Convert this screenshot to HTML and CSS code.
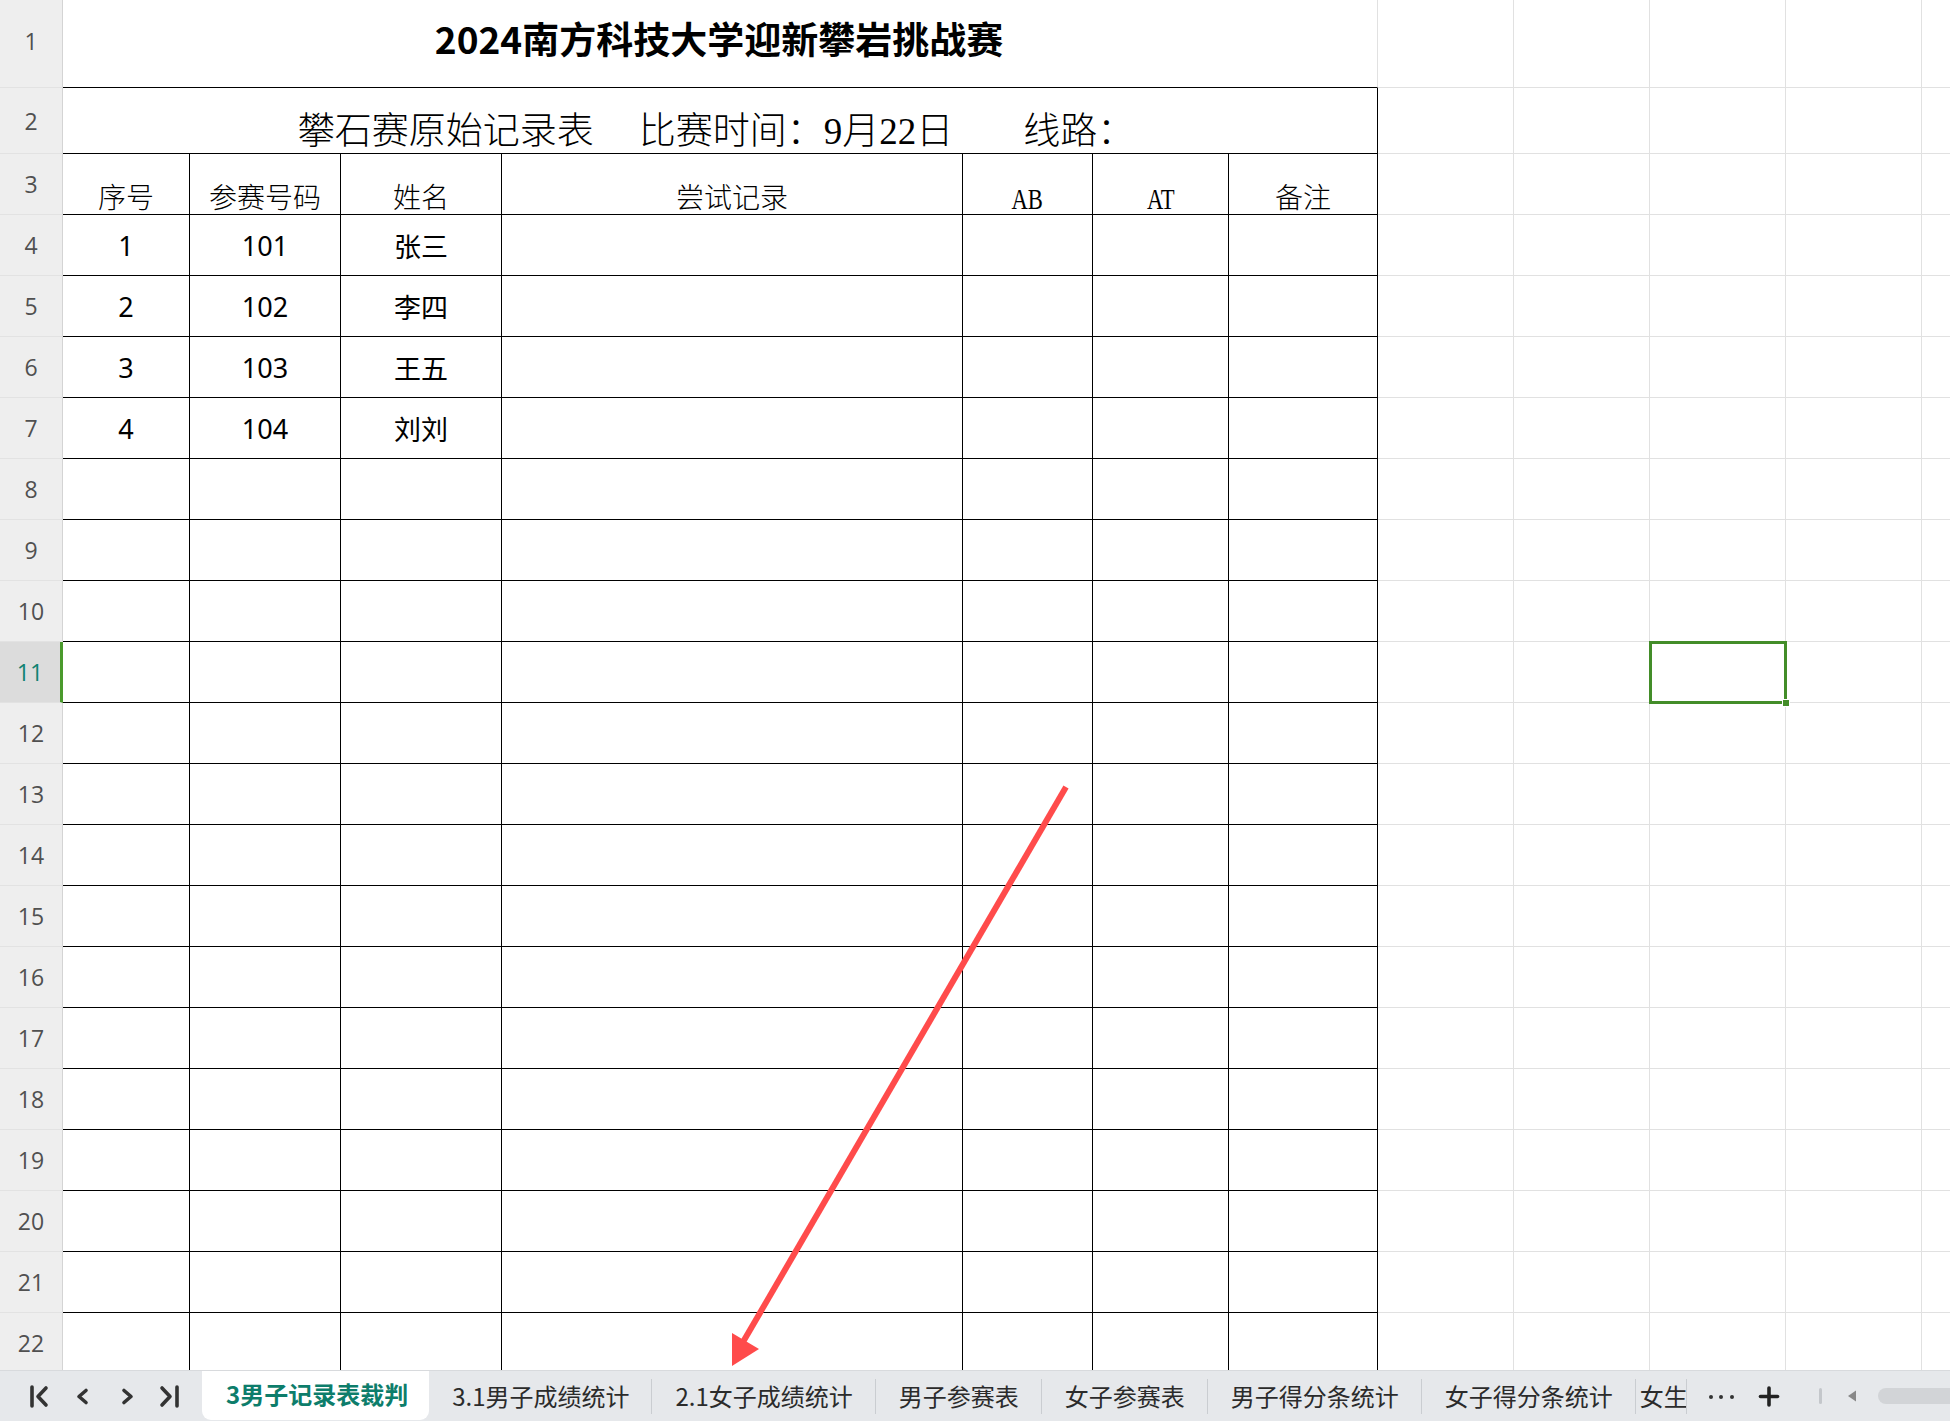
FILE: index.html
```html
<!DOCTYPE html>
<html lang="zh-CN">
<head>
<meta charset="utf-8">
<title>2024南方科技大学迎新攀岩挑战赛</title>
<link rel="stylesheet" href="styles.css">
</head>
<body>
<div class="app">
  <div class="sheet">
    <div class="row r1">
      <div class="h h1">1</div>
      <div class="title">2024南方科技大学迎新攀岩挑战赛</div>
      <div class="g"></div><div class="g"></div><div class="g"></div><div class="g"></div><div class="g"></div>
    </div>
    <div class="row r2">
      <div class="h">2</div>
      <div class="sub"><span>攀石赛原始记录表</span><span class="s2">比赛时间：<span class="lat">9</span>月<span class="lat">22</span>日</span><span class="s3">线路：</span></div>
      <div class="g"></div><div class="g"></div><div class="g"></div><div class="g"></div><div class="g"></div>
    </div>
    <div class="row">
      <div class="h">3</div>
      <div class="t th">序号</div>
      <div class="t th">参赛号码</div>
      <div class="t th">姓名</div>
      <div class="t th">尝试记录</div>
      <div class="t th"><span class="narrow">AB</span></div>
      <div class="t th"><span class="narrow">AT</span></div>
      <div class="t th">备注</div>
      <div class="g"></div><div class="g"></div><div class="g"></div><div class="g"></div><div class="g"></div>
    </div>
    <div class="row">
      <div class="h">4</div>
      <div class="t td">1</div><div class="t td">101</div><div class="t td">张三</div>
      <div class="t"></div><div class="t"></div><div class="t"></div><div class="t"></div>
      <div class="g"></div><div class="g"></div><div class="g"></div><div class="g"></div><div class="g"></div>
    </div>
    <div class="row">
      <div class="h">5</div>
      <div class="t td">2</div><div class="t td">102</div><div class="t td">李四</div>
      <div class="t"></div><div class="t"></div><div class="t"></div><div class="t"></div>
      <div class="g"></div><div class="g"></div><div class="g"></div><div class="g"></div><div class="g"></div>
    </div>
    <div class="row">
      <div class="h">6</div>
      <div class="t td">3</div><div class="t td">103</div><div class="t td">王五</div>
      <div class="t"></div><div class="t"></div><div class="t"></div><div class="t"></div>
      <div class="g"></div><div class="g"></div><div class="g"></div><div class="g"></div><div class="g"></div>
    </div>
    <div class="row">
      <div class="h">7</div>
      <div class="t td">4</div><div class="t td">104</div><div class="t td">刘刘</div>
      <div class="t"></div><div class="t"></div><div class="t"></div><div class="t"></div>
      <div class="g"></div><div class="g"></div><div class="g"></div><div class="g"></div><div class="g"></div>
    </div>
    <div class="row">
      <div class="h">8</div>
      <div class="t"></div><div class="t"></div><div class="t"></div><div class="t"></div><div class="t"></div><div class="t"></div><div class="t"></div>
      <div class="g"></div><div class="g"></div><div class="g"></div><div class="g"></div><div class="g"></div>
    </div>
    <div class="row">
      <div class="h">9</div>
      <div class="t"></div><div class="t"></div><div class="t"></div><div class="t"></div><div class="t"></div><div class="t"></div><div class="t"></div>
      <div class="g"></div><div class="g"></div><div class="g"></div><div class="g"></div><div class="g"></div>
    </div>
    <div class="row">
      <div class="h">10</div>
      <div class="t"></div><div class="t"></div><div class="t"></div><div class="t"></div><div class="t"></div><div class="t"></div><div class="t"></div>
      <div class="g"></div><div class="g"></div><div class="g"></div><div class="g"></div><div class="g"></div>
    </div>
    <div class="row">
      <div class="h cur">11</div>
      <div class="t"></div><div class="t"></div><div class="t"></div><div class="t"></div><div class="t"></div><div class="t"></div><div class="t"></div>
      <div class="g"></div><div class="g"></div><div class="g sel"><div class="selbox"><i class="handle"></i></div></div><div class="g"></div><div class="g"></div>
    </div>
    <div class="row">
      <div class="h">12</div>
      <div class="t"></div><div class="t"></div><div class="t"></div><div class="t"></div><div class="t"></div><div class="t"></div><div class="t"></div>
      <div class="g"></div><div class="g"></div><div class="g"></div><div class="g"></div><div class="g"></div>
    </div>
    <div class="row">
      <div class="h">13</div>
      <div class="t"></div><div class="t"></div><div class="t"></div><div class="t"></div><div class="t"></div><div class="t"></div><div class="t"></div>
      <div class="g"></div><div class="g"></div><div class="g"></div><div class="g"></div><div class="g"></div>
    </div>
    <div class="row">
      <div class="h">14</div>
      <div class="t"></div><div class="t"></div><div class="t"></div><div class="t"></div><div class="t"></div><div class="t"></div><div class="t"></div>
      <div class="g"></div><div class="g"></div><div class="g"></div><div class="g"></div><div class="g"></div>
    </div>
    <div class="row">
      <div class="h">15</div>
      <div class="t"></div><div class="t"></div><div class="t"></div><div class="t"></div><div class="t"></div><div class="t"></div><div class="t"></div>
      <div class="g"></div><div class="g"></div><div class="g"></div><div class="g"></div><div class="g"></div>
    </div>
    <div class="row">
      <div class="h">16</div>
      <div class="t"></div><div class="t"></div><div class="t"></div><div class="t"></div><div class="t"></div><div class="t"></div><div class="t"></div>
      <div class="g"></div><div class="g"></div><div class="g"></div><div class="g"></div><div class="g"></div>
    </div>
    <div class="row">
      <div class="h">17</div>
      <div class="t"></div><div class="t"></div><div class="t"></div><div class="t"></div><div class="t"></div><div class="t"></div><div class="t"></div>
      <div class="g"></div><div class="g"></div><div class="g"></div><div class="g"></div><div class="g"></div>
    </div>
    <div class="row">
      <div class="h">18</div>
      <div class="t"></div><div class="t"></div><div class="t"></div><div class="t"></div><div class="t"></div><div class="t"></div><div class="t"></div>
      <div class="g"></div><div class="g"></div><div class="g"></div><div class="g"></div><div class="g"></div>
    </div>
    <div class="row">
      <div class="h">19</div>
      <div class="t"></div><div class="t"></div><div class="t"></div><div class="t"></div><div class="t"></div><div class="t"></div><div class="t"></div>
      <div class="g"></div><div class="g"></div><div class="g"></div><div class="g"></div><div class="g"></div>
    </div>
    <div class="row">
      <div class="h">20</div>
      <div class="t"></div><div class="t"></div><div class="t"></div><div class="t"></div><div class="t"></div><div class="t"></div><div class="t"></div>
      <div class="g"></div><div class="g"></div><div class="g"></div><div class="g"></div><div class="g"></div>
    </div>
    <div class="row">
      <div class="h">21</div>
      <div class="t"></div><div class="t"></div><div class="t"></div><div class="t"></div><div class="t"></div><div class="t"></div><div class="t"></div>
      <div class="g"></div><div class="g"></div><div class="g"></div><div class="g"></div><div class="g"></div>
    </div>
    <div class="row">
      <div class="h">22</div>
      <div class="t"></div><div class="t"></div><div class="t"></div><div class="t"></div><div class="t"></div><div class="t"></div><div class="t"></div>
      <div class="g"></div><div class="g"></div><div class="g"></div><div class="g"></div><div class="g"></div>
    </div>

    <svg class="arrow" width="1950" height="1370" viewBox="0 0 1950 1370">
      <line x1="1066" y1="787" x2="743" y2="1342" stroke="#ff4b4b" stroke-width="6"/>
      <polygon points="732,1333 732,1366 759,1349" fill="#ff4b4b"/>
    </svg>
  </div>

  <div class="tabbar">
    <svg class="nav" width="202" height="50" viewBox="0 0 202 50">
      <g fill="none" stroke="#333" stroke-width="3.6" stroke-linecap="round" stroke-linejoin="round">
        <path d="M32 16 V35"/>
        <path d="M46 17 L38 25.5 L46 34"/>
        <path d="M86 19.5 L79 25.5 L86 31.5"/>
        <path d="M124 19.5 L131 25.5 L124 31.5"/>
        <path d="M162 17 L170 25.5 L162 34"/>
        <path d="M177 16 V35"/>
      </g>
    </svg>
    <div class="tabs">
      <div class="tab active">3男子记录表裁判</div>
      <div class="tab">3.1男子成绩统计</div><i class="sep"></i>
      <div class="tab">2.1女子成绩统计</div><i class="sep"></i>
      <div class="tab">男子参赛表</div><i class="sep"></i>
      <div class="tab">女子参赛表</div><i class="sep"></i>
      <div class="tab">男子得分条统计</div><i class="sep"></i>
      <div class="tab">女子得分条统计</div><i class="sep"></i>
      <div class="tab last">女生得分条统计</div>
    </div>
    <i class="sep"></i>
    <div class="more">
      <svg width="68" height="50" viewBox="0 0 68 50"><g fill="#333"><circle cx="24" cy="26" r="2"/><circle cx="34" cy="26" r="2"/><circle cx="45" cy="26" r="2"/></g></svg>
    </div>
    <div class="add">
      <svg width="28" height="50" viewBox="0 0 28 50"><g stroke="#222" stroke-width="3.6" stroke-linecap="round"><path d="M14 17 V34"/><path d="M5.5 25.5 H22.5"/></g></svg>
    </div>
    <i class="vbar"></i>
    <svg class="tri" width="10" height="12" viewBox="0 0 10 12"><path d="M9 0.5 V11.5 L1 6 Z" fill="#888"/></svg>
    <div class="thumb"></div>
  </div>
</div>
</body>
</html>
```
FILE: styles.css
```css
* { box-sizing: border-box; }
html, body { margin: 0; padding: 0; }
body {
  width: 1950px;
  height: 1421px;
  overflow: hidden;
  background: #fff;
  font-family: "Noto Sans", "Noto Sans CJK SC", sans-serif;
}
.app {
  display: flex;
  flex-direction: column;
  width: 1950px;
  height: 1421px;
}
.sheet {
  position: relative;
  height: 1370px;
  overflow: hidden;
  flex: none;
}
.row {
  display: grid;
  grid-template-columns: 63px 127px 151px 161px 461px 130px 136px 149px 136px 136px 136px 136px 136px;
  height: 61px;
}
.r1 { height: 88px; }
.r2 { height: 66px; }
.row > div { min-width: 0; overflow: hidden; }

.h {
  background: #eeeeee;
  border-right: 1px solid #d4d4d4;
  border-bottom: 1px solid #e2e2e2;
  color: #505050;
  font-family: "Open Sans", "Noto Sans", sans-serif;
  font-size: 23px;
  display: flex;
  align-items: center;
  justify-content: center;
}
.h.h1 { padding-bottom: 6px; }
.h.cur {
  background: #dcdcdc;
  color: #0f8272;
  border-right: 3px solid #4a9a2c;
}
.g {
  border-right: 1px solid #e1e1e1;
  border-bottom: 1px solid #e1e1e1;
}
.t {
  border-right: 1px solid #000;
  border-bottom: 1px solid #000;
}
.title {
  grid-column: span 7;
  border-bottom: 1px solid #000;
  border-right: 1px solid #e1e1e1;
  display: flex;
  align-items: center;
  justify-content: center;
  font-family: "Noto Sans CJK SC", sans-serif;
  font-weight: 700;
  font-size: 37px;
  color: #000;
  padding: 0 2px 12px 0;
  white-space: nowrap;
}
.sub {
  grid-column: span 7;
  border-bottom: 1px solid #000;
  border-right: 1px solid #000;
  display: flex;
  align-items: flex-end;
  justify-content: center;
  padding: 0 8px 0 0;
  font-family: "Liberation Serif", "Noto Sans CJK SC", serif;
  font-weight: 300;
  font-size: 37px;
  line-height: 42px;
  color: #000;
  white-space: nowrap;
}
.sub .s2 { margin-left: 45px; }
.sub .s3 { margin-left: 70px; }
.lat { font-weight: 400; }
.th {
  display: flex;
  align-items: flex-end;
  justify-content: center;
  font-family: "Liberation Serif", "Noto Sans CJK SC", serif;
  font-weight: 300;
  font-size: 28px;
  line-height: 30px;
  color: #000;
  padding-bottom: 0;
  white-space: nowrap;
}
.narrow {
  display: inline-block;
  font-weight: 400;
  font-size: 29px;
  transform: scaleX(0.78);
}
.td {
  display: flex;
  align-items: center;
  justify-content: center;
  font-family: "Noto Sans", "Noto Sans CJK SC", sans-serif;
  font-size: 27px;
  color: #000;
  padding-top: 0;
}
.sel { position: relative; overflow: visible !important; }
.selbox {
  position: absolute;
  top: -1px;
  left: -1px;
  right: -2px;
  bottom: -2px;
  border: 3px solid #438d29;
  z-index: 2;
}
.handle {
  position: absolute;
  right: -6px;
  bottom: -6px;
  width: 8px;
  height: 8px;
  background: #438d29;
  border: 1px solid #fff;
}
.arrow {
  position: absolute;
  top: 0;
  left: 0;
  pointer-events: none;
  z-index: 3;
}

.tabbar {
  flex: none;
  height: 51px;
  background: #e6e8eb;
  border-top: 1px solid #d8dadd;
  display: flex;
  align-items: stretch;
  font-family: "Noto Sans CJK SC", sans-serif;
  font-size: 24px;
  color: #2b2b2b;
}
.nav { flex: none; display: block; }
.tabs {
  display: flex;
  align-items: center;
  width: 1484px;
  flex: none;
  overflow: hidden;
}
.tab {
  flex: none;
  height: 100%;
  display: flex;
  align-items: center;
  padding: 0 22px 2px 23px;
  white-space: nowrap;
}
.tab.active {
  background: #fff;
  color: #0d7d6b;
  font-weight: 700;
  margin-top: -1px;
  height: calc(100% + 1px);
  margin-bottom: 3px;
  padding: 0 21px 2px 24px;
  border-radius: 0 0 9px 9px;
}
.tab.last { padding-left: 4px; }
.sep {
  flex: none;
  width: 1px;
  height: 35px;
  background: #cacdd1;
  align-self: center;
}
.more, .add { flex: none; display: flex; }
.more svg, .add svg { display: block; }
.vbar {
  flex: none;
  width: 3px;
  height: 16px;
  border-radius: 2px;
  background: #c4c7cb;
  align-self: center;
  margin-left: 36px;
}
.tri {
  flex: none;
  align-self: center;
  margin-left: 25px;
}
.thumb {
  flex: none;
  width: 120px;
  height: 16px;
  border-radius: 8px;
  background: #d2d4d7;
  align-self: center;
  margin-left: 21px;
}
```
